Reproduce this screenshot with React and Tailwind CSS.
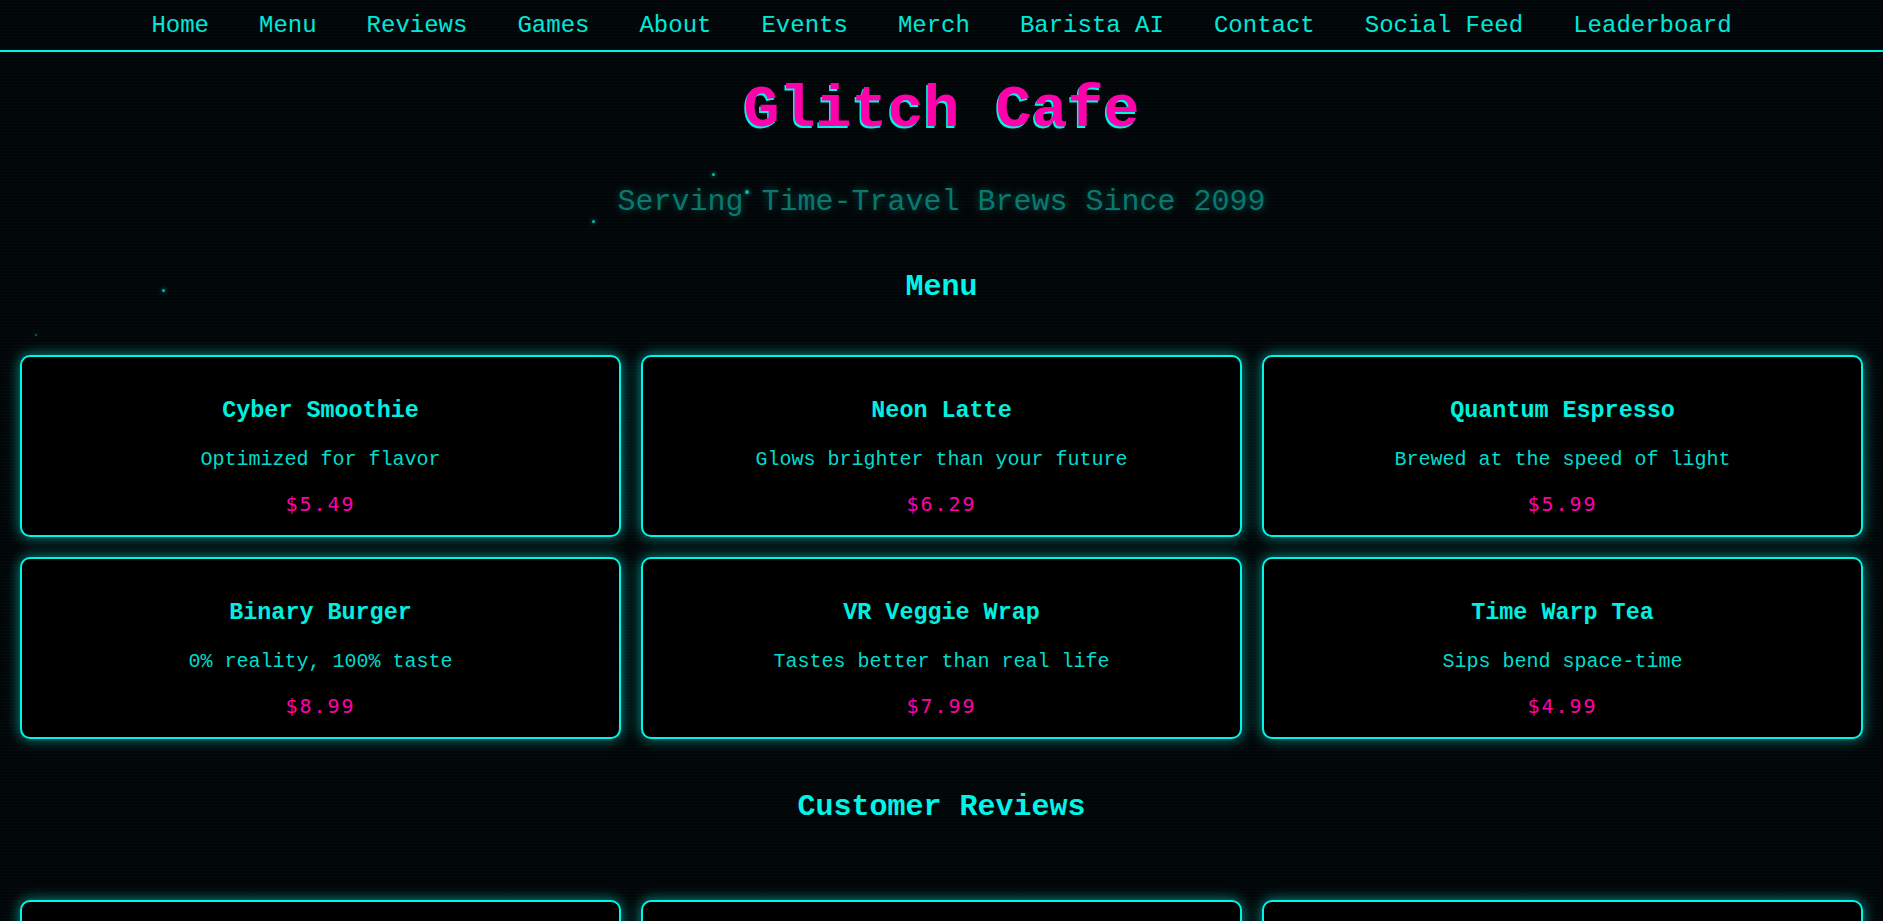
import React from 'react'

const navLinks = ['Home', 'Menu', 'Reviews', 'Games', 'About', 'Events', 'Merch', 'Barista AI', 'Contact', 'Social Feed', 'Leaderboard']

const menuItems = [
  { name: 'Cyber Smoothie', desc: 'Optimized for flavor', price: '$5.49' },
  { name: 'Neon Latte', desc: 'Glows brighter than your future', price: '$6.29' },
  { name: 'Quantum Espresso', desc: 'Brewed at the speed of light', price: '$5.99' },
  { name: 'Binary Burger', desc: '0% reality, 100% taste', price: '$8.99' },
  { name: 'VR Veggie Wrap', desc: 'Tastes better than real life', price: '$7.99' },
  { name: 'Time Warp Tea', desc: 'Sips bend space-time', price: '$4.99' },
]

const reviews = [
  { text: '"The Neon Latte rebooted my whole week."', author: '- Zero_Cool' },
  { text: '"Ordered yesterday, arrived last Tuesday."', author: '- ChronoKat' },
  { text: '"10/10 would glitch again."', author: '- Pixel_Punk' },
]

// floating particles in the background
const particles = [
  [712, 173, 3], [745, 190, 4], [592, 220, 3], [162, 289, 3], [35, 334, 2],
  [740, 453, 2], [1208, 503, 2], [1831, 437, 2], [452, 597, 2], [586, 610, 3], [1409, 630, 2],
]

function MenuCard({ item }) {
  return (
    <div className="rounded-[10px] border-2 border-[#00f5e6] bg-black shadow-[0_0_14px_#00f5e699] pt-[40px] pb-[17px] flex flex-col items-center text-center">
      <h3 className="text-[23.4px] leading-[28px] font-bold text-[#00f0e0]">{item.name}</h3>
      <p className="mt-[23px] text-[20px] leading-[24px] text-[#00dccd]">{item.desc}</p>
      <p className="mt-[18px] text-[20px] leading-[28px] tracking-[0.1em] text-[#ff00aa] font-['DejaVu_Sans_Mono',monospace]">{item.price}</p>
    </div>
  )
}

export default function App() {
  return (
    <div className="relative min-h-screen overflow-hidden bg-[#030608] font-['Liberation_Mono','Courier_New',monospace] text-[#00f0e0]">
      {/* scanlines */}
      <div className="pointer-events-none absolute inset-0 bg-[repeating-linear-gradient(0deg,rgba(0,255,238,0.015)_0px,rgba(0,255,238,0.015)_1px,transparent_1px,transparent_3px)]" />

      {particles.map(([x, y, s], i) => (
        <span
          key={i}
          className="pointer-events-none absolute rounded-full bg-[#00e6d6] shadow-[0_0_4px_#00e6d6]"
          style={{ left: x, top: y, width: s, height: s, opacity: s > 2 ? 0.8 : 0.45 }}
        />
      ))}

      <nav className="relative h-[52px] pt-[2px] border-b-2 border-[#00f5e6] flex items-center justify-center gap-[50px]">
        {navLinks.map(link => (
          <a key={link} href="#" className="text-[24px] leading-[28px] text-[#00e8d8]">
            {link}
          </a>
        ))}
      </nav>

      <header className="relative text-center">
        <h1 className="mt-[22px] text-[60px] leading-[72px] font-bold text-[#ff00aa] [text-shadow:-1.5px_1.5px_0_#00f5e6]">
          Glitch Cafe
        </h1>
        <p className="mt-[38px] text-[30px] leading-[36px] text-[#0a786e] [text-shadow:0_0_8px_#00f5e655]">
          Serving Time-Travel Brews Since 2099
        </p>
      </header>

      {/* Menu */}
      <section className="relative px-5">
        <h2 className="mt-[49px] text-center text-[30px] leading-[36px] font-bold text-[#00f5e6]">Menu</h2>
        <div className="mt-[50px] grid grid-cols-3 gap-5">
          {menuItems.map(item => (
            <MenuCard key={item.name} item={item} />
          ))}
        </div>
      </section>

      {/* Reviews */}
      <section className="relative px-5 pb-10">
        <h2 className="mt-[50px] text-center text-[30px] leading-[36px] font-bold text-[#00f5e6]">Customer Reviews</h2>
        <div className="mt-[75px] grid grid-cols-3 gap-5">
          {reviews.map(r => (
            <div key={r.author} className="rounded-[10px] border-2 border-[#00f5e6] bg-black shadow-[0_0_14px_#00f5e699] p-8 text-center">
              <p className="text-[20px] text-[#00dccd]">{r.text}</p>
              <p className="mt-4 text-[20px] text-[#ff00aa]">{r.author}</p>
            </div>
          ))}
        </div>
      </section>
    </div>
  )
}
